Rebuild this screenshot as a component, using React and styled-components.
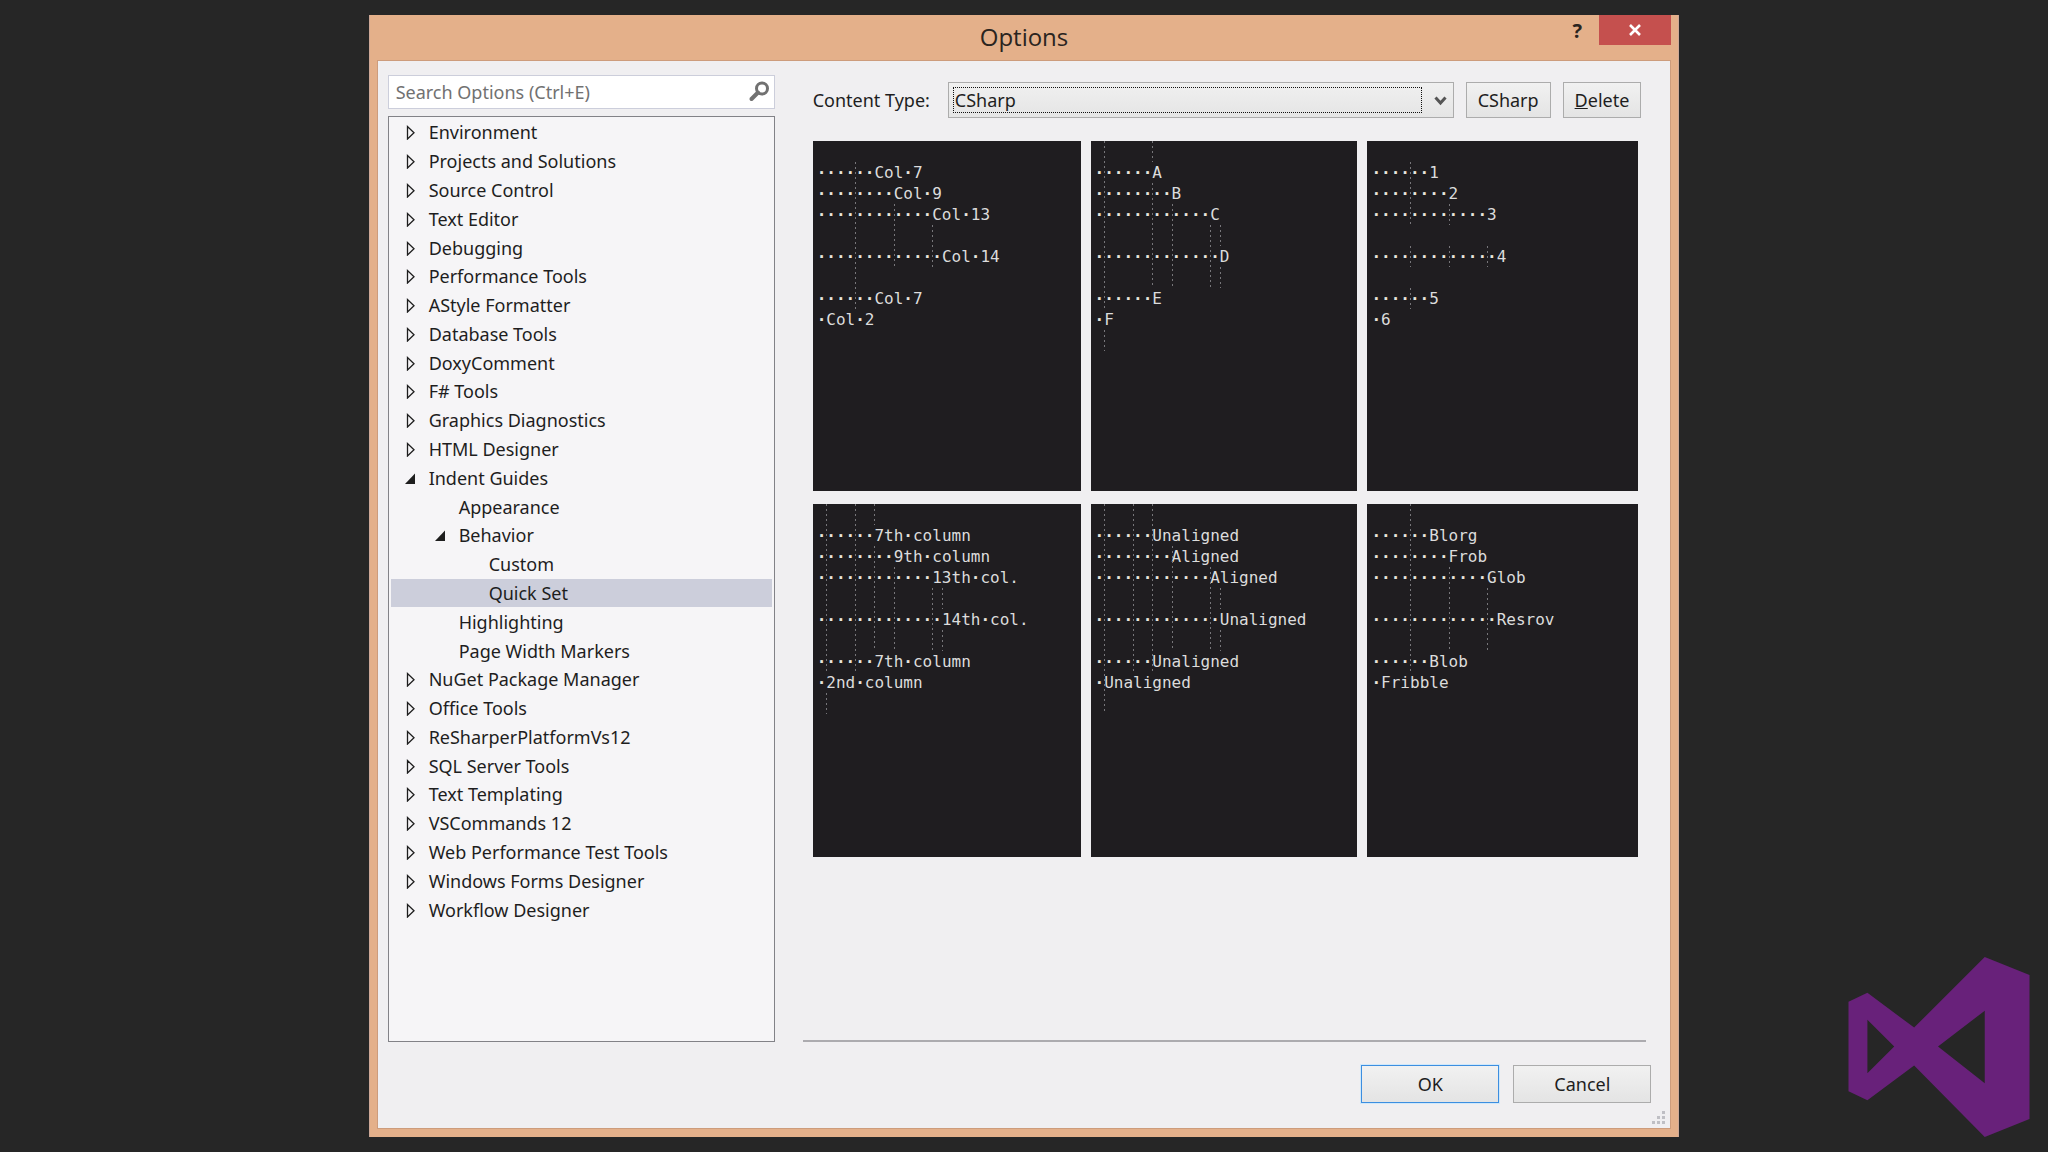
import React, { useState } from "react";
import styled, { createGlobalStyle } from "styled-components";

const treeItems = [
  { label: "Environment", depth: 0, state: "closed" },
  { label: "Projects and Solutions", depth: 0, state: "closed" },
  { label: "Source Control", depth: 0, state: "closed" },
  { label: "Text Editor", depth: 0, state: "closed" },
  { label: "Debugging", depth: 0, state: "closed" },
  { label: "Performance Tools", depth: 0, state: "closed" },
  { label: "AStyle Formatter", depth: 0, state: "closed" },
  { label: "Database Tools", depth: 0, state: "closed" },
  { label: "DoxyComment", depth: 0, state: "closed" },
  { label: "F# Tools", depth: 0, state: "closed" },
  { label: "Graphics Diagnostics", depth: 0, state: "closed" },
  { label: "HTML Designer", depth: 0, state: "closed" },
  { label: "Indent Guides", depth: 0, state: "open" },
  { label: "Appearance", depth: 1 },
  { label: "Behavior", depth: 1, state: "open" },
  { label: "Custom", depth: 2 },
  { label: "Quick Set", depth: 2 },
  { label: "Highlighting", depth: 1 },
  { label: "Page Width Markers", depth: 1 },
  { label: "NuGet Package Manager", depth: 0, state: "closed" },
  { label: "Office Tools", depth: 0, state: "closed" },
  { label: "ReSharperPlatformVs12", depth: 0, state: "closed" },
  { label: "SQL Server Tools", depth: 0, state: "closed" },
  { label: "Text Templating", depth: 0, state: "closed" },
  { label: "VSCommands 12", depth: 0, state: "closed" },
  { label: "Web Performance Test Tools", depth: 0, state: "closed" },
  { label: "Windows Forms Designer", depth: 0, state: "closed" },
  { label: "Workflow Designer", depth: 0, state: "closed" },
];

// indent of each preview line, null is an empty line
const indents = [6, 8, 12, null, 13, null, 6, 1];

// guides are [column, first line, line after the last], line -1 is the top padding
const previews = [
  {
    lines: ["Col 7", "Col 9", "Col 13", "", "Col 14", "", "Col 7", "Col 2"],
    guides: [[4, 0, 7], [8, 2, 5], [12, 3, 5]],
  },
  {
    lines: ["A", "B", "C", "", "D", "", "E", "F"],
    guides: [[1, -1, 7], [1, 8, 9], [6, -1, 0], [6, 1, 6], [8, 2, 6], [12, 3, 6], [13, 3, 4], [13, 5, 6]],
  },
  {
    lines: ["1", "2", "3", "", "4", "", "5", "6"],
    guides: [[4, 0, 3], [4, 4, 5], [4, 6, 7], [8, 2, 3], [8, 4, 5], [12, 4, 5]],
  },
  {
    lines: ["7th column", "9th column", "13th col.", "", "14th col.", "", "7th column", "2nd column"],
    guides: [[1, -1, 7], [1, 8, 9], [4, -1, 7], [6, -1, 0], [6, 1, 6], [8, 2, 6], [12, 3, 6], [13, 3, 4], [13, 5, 6]],
  },
  {
    lines: ["Unaligned", "Aligned", "Aligned", "", "Unaligned", "", "Unaligned", "Unaligned"],
    guides: [[1, -1, 9], [4, -1, 7], [6, -1, 7], [8, 1, 6], [12, 2, 6], [13, 3, 4], [13, 5, 6]],
  },
  {
    lines: ["Blorg", "Frob", "Glob", "", "Resrov", "", "Blob", "Fribble"],
    guides: [[4, -1, 7], [8, 2, 6], [12, 3, 6]],
  },
];

const GlobalStyle = createGlobalStyle`
  * {
    box-sizing: border-box;
  }
  body {
    margin: 0;
    background: #262626;
    color: #1e1e1e;
    font-family: "Noto Sans", "Open Sans", sans-serif;
    font-size: 18px;
  }
  button, input, select {
    font: inherit;
    color: inherit;
  }
`;

const Desktop = styled.div`
  display: grid;
  grid-template-columns: 1fr 64% 1fr;
  min-height: 100vh;
  padding: 15px 0;
`;

const Dialog = styled.main`
  grid-column: 2;
  display: flex;
  flex-direction: column;
  padding: 0 7px 8px;
  background: #e4b08a;
  border-left: 1px solid #cda897;
  border-right: 1px solid #cda897;
`;

const TitleBar = styled.header`
  display: grid;
  grid-template-columns: 1fr auto 1fr;
  align-items: start;
  height: 45px;
`;

const Title = styled.h1`
  grid-column: 2;
  margin: 0;
  color: #2a2420;
  font-size: 24px;
  font-family: "Open Sans", sans-serif;
  font-weight: 400;
  line-height: 44px;
`;

const WindowButtons = styled.div`
  display: flex;
  justify-content: flex-end;
`;

const WindowButton = styled.button`
  display: flex;
  align-items: center;
  justify-content: center;
  width: ${(props) => (props.$close ? "72px" : "44px")};
  height: 30px;
  padding: 0;
  border: 0;
  background: ${(props) => (props.$close ? "#c5504e" : "transparent")};
  color: ${(props) => (props.$close ? "#fff" : "#2a2420")};
  font-size: 20px;
  font-weight: 700;
`;

const Client = styled.div`
  position: relative;
  flex: 1;
  display: grid;
  grid-template-columns: 387px 1fr;
  grid-template-rows: 1fr auto;
  column-gap: 28px;
  padding: 14px 10px 25px;
  background: #f0eff1;
  border: 1px solid #cd9c7c;
`;

const Sidebar = styled.nav`
  display: flex;
  flex-direction: column;
  gap: 7px;
`;

const SearchBox = styled.label`
  display: flex;
  align-items: center;
  height: 34px;
  padding: 0 4px 0 7px;
  background: #fff;
  border: 1px solid #cccedb;
`;

const SearchInput = styled.input`
  flex: 1;
  min-width: 0;
  padding: 0;
  border: 0;
  outline: 0;
  background: none;
  &::placeholder {
    color: #717171;
    opacity: 1;
  }
`;

const Tree = styled.ul`
  flex: 1;
  display: grid;
  grid-auto-rows: 1fr;
  margin: 0;
  padding: 1px 2px 117px 2px;
  list-style: none;
  background: #f6f5f7;
  border: 1px solid #828287;
`;

const TreeRow = styled.li`
  display: flex;
  background: ${(props) => (props.$selected ? "#cccedb" : "transparent")};
`;

const TreeButton = styled.button`
  flex: 1;
  display: flex;
  align-items: center;
  gap: 12px;
  padding: 0 0 0 ${(props) => 12 + props.$depth * 30}px;
  border: 0;
  background: none;
  line-height: 28px;
  text-align: left;
`;

const Arrow = styled.svg`
  flex: none;
  width: 14px;
  height: 16px;
`;

const Content = styled.section`
  display: flex;
  flex-direction: column;
  border-bottom: 2px solid #acabaf;
  margin-right: 14px;
  padding: 7px 8px 0 10px;
`;

const Toolbar = styled.div`
  display: flex;
  align-items: center;
  gap: 12px;
  margin-right: -3px;
`;

const TypeLabel = styled.label`
  margin-right: 6px;
`;

const SelectWrap = styled.div`
  position: relative;
  flex: 1;
  display: flex;
  height: 36px;
  padding: 4px;
  border: 1px solid #acacac;
  background: linear-gradient(#f0f0f0, #e5e5e5);
`;

const TypeSelect = styled.select`
  flex: 1;
  appearance: none;
  margin-right: 27px;
  padding: 0 0 0 1px;
  border: 1px dotted #111;
  border-radius: 0;
  outline: 0;
  background: none;
  line-height: 24px;
`;

const SelectArrow = styled.svg`
  position: absolute;
  right: 6px;
  top: 12px;
  width: 13px;
  height: 12px;
  pointer-events: none;
`;

const Button = styled.button`
  min-width: ${(props) => props.$width || "78px"};
  height: ${(props) => props.$height || "36px"};
  padding: 0 11px;
  border: 1px solid ${(props) => (props.$primary ? "#3c8ee0" : "#acacac")};
  box-shadow: ${(props) => (props.$primary ? "0 0 0 1px #cfe8fb" : "none")};
  background: linear-gradient(#f1f1f1, #e4e4e4);
`;

const Previews = styled.div`
  display: grid;
  grid-template-columns: 268fr 267fr 271fr;
  grid-template-rows: 350px 353px;
  gap: 13px 10px;
  margin-top: 23px;
`;

const Preview = styled.pre`
  position: relative;
  margin: 0;
  padding: 21px 4px;
  overflow: hidden;
  background: #1f1d20;
  color: #dcdcdc;
  font-family: "DejaVu Sans Mono", monospace;
  font-size: 16px;
  line-height: 21px;
`;

const CodeLine = styled.div`
  height: 21px;
`;

const Space = styled.b`
  color: #e8e4dc;
`;

const Guide = styled.i`
  position: absolute;
  left: calc(4px + ${(props) => props.$column}ch);
  top: ${(props) => 21 + props.$from * 21}px;
  width: 1px;
  height: ${(props) => (props.$to - props.$from) * 21}px;
  background: repeating-linear-gradient(#77767a 0 2px, transparent 2px 5px);
`;

const Footer = styled.footer`
  grid-column: 1 / -1;
  display: flex;
  justify-content: flex-end;
  gap: 14px;
  padding: 23px 9px 0 0;
`;

const Grip = styled.svg`
  position: absolute;
  right: 4px;
  bottom: 3px;
  width: 14px;
  height: 14px;
`;

const Logo = styled.svg`
  grid-column: 3;
  align-self: end;
  justify-self: end;
  width: 182px;
  height: 180px;
  margin: 0 18px 0 0;
`;

function TreeArrow({ state }) {
  return (
    <Arrow viewBox="0 0 14 16" aria-hidden="true">
      {state === "closed" && (
        <path d="M4.500 2.500v12.500l6.500-6.200z" fill="none" stroke="#1e1e1e" strokeWidth="1.300" />
      )}
      {state === "open" && <path d="M12 3.500v10.500H2z" fill="#1e1e1e" />}
    </Arrow>
  );
}

function IndentPreview({ lines, guides }) {
  return (
    <Preview>
      {guides.map(([column, from, to]) => (
        <Guide key={`${column}-${from}`} $column={column} $from={from} $to={to} />
      ))}
      {lines.map((text, i) => {
        const [first, second] = text.split(" ");
        return (
          <CodeLine key={i}>
            <Space>{"·".repeat(indents[i] || 0)}</Space>
            {first}
            {second && <Space>·</Space>}
            {second}
          </CodeLine>
        );
      })}
    </Preview>
  );
}

function App() {
  const [selected, setSelected] = useState("Quick Set");
  const [type, setType] = useState("CSharp");

  return (
    <>
      <GlobalStyle />
      <Desktop>
        <Dialog>
          <TitleBar>
            <Title>Options</Title>
            <WindowButtons>
              <WindowButton aria-label="Help">?</WindowButton>
              <WindowButton $close aria-label="Close">
                <svg width="14" height="12" viewBox="0 0 14 12">
                  <path d="M2 1l10 10M12 1L2 11" stroke="#fff" strokeWidth="2.600" />
                </svg>
              </WindowButton>
            </WindowButtons>
          </TitleBar>
          <Client>
            <Sidebar>
              <SearchBox>
                <SearchInput aria-label="Search Options" placeholder="Search Options (Ctrl+E)" />
                <svg width="22" height="22" viewBox="0 0 22 22" aria-hidden="true">
                  <circle cx="14" cy="7.500" r="5.500" fill="none" stroke="#717171" strokeWidth="3" />
                  <path d="M10 11.500l-6.500 6.500" stroke="#717171" strokeWidth="4" strokeLinecap="round" />
                </svg>
              </SearchBox>
              <Tree>
                {treeItems.map((item) => (
                  <TreeRow key={item.label} $selected={item.label === selected}>
                    <TreeButton $depth={item.depth} onClick={() => setSelected(item.label)}>
                      <TreeArrow state={item.state} />
                      {item.label}
                    </TreeButton>
                  </TreeRow>
                ))}
              </Tree>
            </Sidebar>
            <Content>
              <Toolbar>
                <TypeLabel htmlFor="content-type">Content Type:</TypeLabel>
                <SelectWrap>
                  <TypeSelect id="content-type" value={type} onChange={(e) => setType(e.target.value)}>
                    <option>CSharp</option>
                  </TypeSelect>
                  <SelectArrow viewBox="0 0 13 12" aria-hidden="true">
                    <path d="M1.500 2.500l5 5.500 5-5.500" fill="none" stroke="#555" strokeWidth="3" />
                  </SelectArrow>
                </SelectWrap>
                <Button>CSharp</Button>
                <Button>
                  <u>D</u>elete
                </Button>
              </Toolbar>
              <Previews>
                {previews.map((preview, i) => (
                  <IndentPreview key={i} {...preview} />
                ))}
              </Previews>
            </Content>
            <Footer>
              <Button $primary $width="138px" $height="38px">OK</Button>
              <Button $width="138px" $height="38px">Cancel</Button>
            </Footer>
            <Grip viewBox="0 0 14 14" aria-hidden="true">
              <path
                d="M10 0h3v3h-3zM5 5h3v3H5zM10 5h3v3h-3zM0 10h3v3H0zM5 10h3v3H5zM10 10h3v3h-3z"
                fill="#bfbfc4"
              />
            </Grip>
          </Client>
        </Dialog>
        <Logo viewBox="0 0 182 181" aria-hidden="true">
          <path
            d="M0 45L19 36 66 71 137 0l45 18v145l-45 18L66 109 19 144 0 135zM19 63v54l27-27zM137 54L90 90l47 37z"
            fill="#68217a"
            fillRule="evenodd"
          />
        </Logo>
      </Desktop>
    </>
  );
}

export default App;
